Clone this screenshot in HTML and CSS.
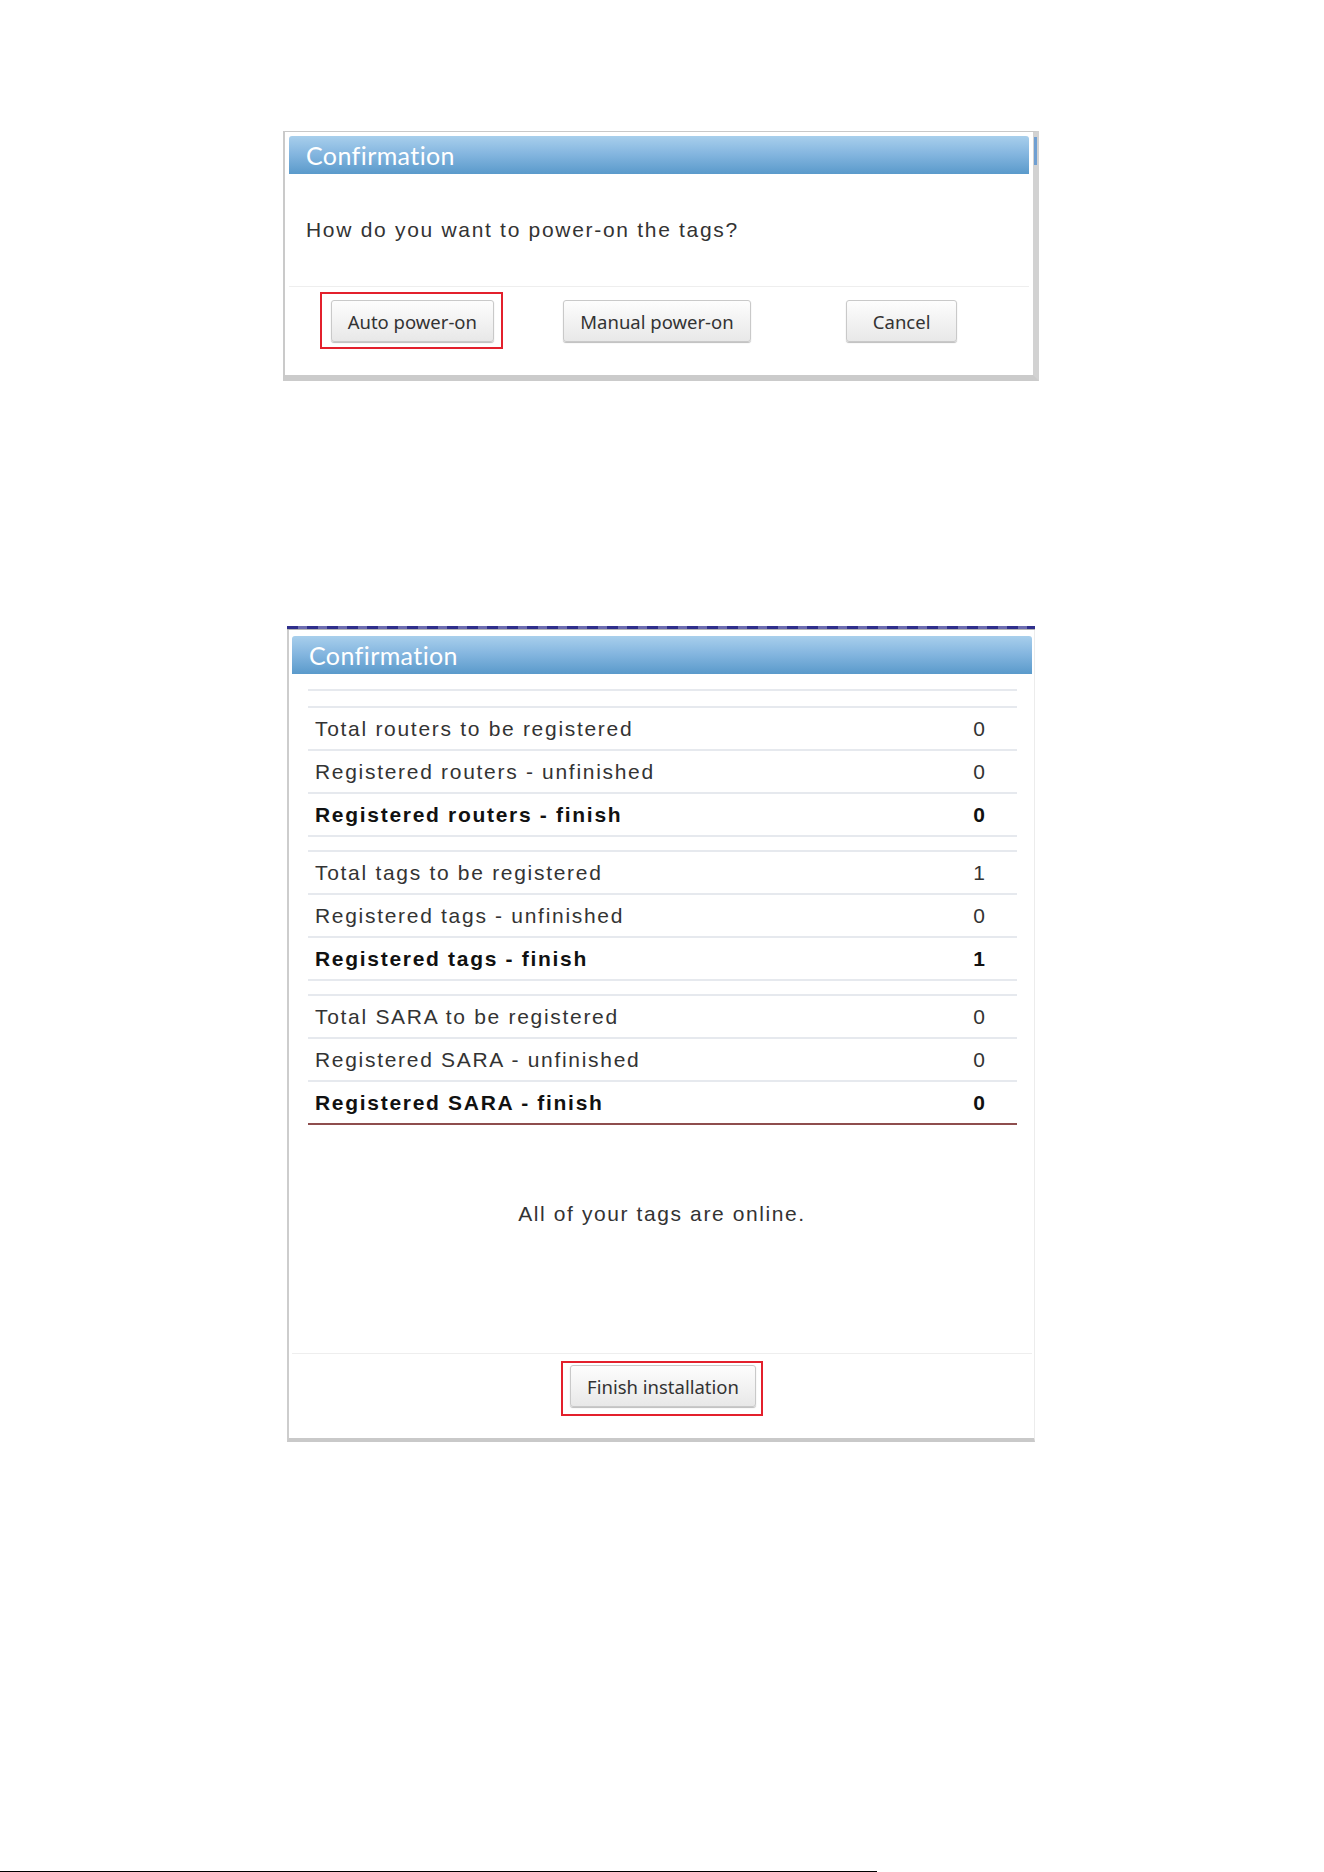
FILE: index.html
```html
<!DOCTYPE html>
<html lang="en">
<head>
    <meta charset="UTF-8">
    <title>Confirmation</title>
    <link rel="stylesheet" href="styles.css">
</head>
<body>
    <div class="page">
        <!-- power-on question -->
        <div class="dialog dialog-power">
            <div class="dialog-head">Confirmation</div>
            <div class="dialog-text">How do you want to power-on the tags?</div>
            <div class="dialog-foot three">
                <span class="slot marked"><button class="btn">Auto power-on</button></span>
                <span class="slot"><button class="btn">Manual power-on</button></span>
                <span class="slot"><button class="btn">Cancel</button></span>
            </div>
        </div>

        <!-- registration summary -->
        <div class="dialog dialog-summary">
            <div class="dialog-head">Confirmation</div>
            <table class="summary">
                <tr class="blank"><td colspan="2"></td></tr>
                <tr><td>Total routers to be registered</td><td class="num">0</td></tr>
                <tr><td>Registered routers - unfinished</td><td class="num">0</td></tr>
                <tr class="strong"><td>Registered routers - finish</td><td class="num">0</td></tr>
                <tr class="gap"><td colspan="2"></td></tr>
                <tr><td>Total tags to be registered</td><td class="num">1</td></tr>
                <tr><td>Registered tags - unfinished</td><td class="num">0</td></tr>
                <tr class="strong"><td>Registered tags - finish</td><td class="num">1</td></tr>
                <tr class="gap"><td colspan="2"></td></tr>
                <tr><td>Total SARA to be registered</td><td class="num">0</td></tr>
                <tr><td>Registered SARA - unfinished</td><td class="num">0</td></tr>
                <tr class="strong last"><td>Registered SARA - finish</td><td class="num">0</td></tr>
            </table>
            <div class="message">All of your tags are online.</div>
            <div class="dialog-foot single">
                <span class="slot marked finish"><button class="btn">Finish installation</button></span>
            </div>
        </div>

        <div class="page-rule"></div>
    </div>
</body>
</html>
```

FILE: styles.css
```css
body {
    margin: 0;
    background: #fff;
    font-family: "Liberation Sans", Arial, sans-serif;
    color: #333;
}
.page {
    padding-top: 131px;
}
.dialog {
    box-sizing: border-box;
    background: #fff;
    position: relative;
}
.dialog-power {
    margin-left: 283px;
    width: 756px;
    border-top: 1px solid #c8c8c8;
    border-left: 2px solid #cacaca;
    border-right: 6px solid #d2d2d2;
    border-bottom: 6px solid #cbcbcb;
    padding: 4px 4px 0 4px;
}
/* little blue scroll thumb on the right edge */
.dialog-power::after {
    content: "";
    position: absolute;
    right: -4px;
    top: 5px;
    width: 3px;
    height: 28px;
    background: #6f9fd2;
}
.dialog-summary {
    margin-top: 245px;
    margin-left: 287px;
    width: 748px;
    border-left: 2px solid #cdcdcd;
    border-right: 1px solid #ececec;
    border-bottom: 4px solid #c9c9c9;
    padding: 10px 2px 0 3px;
}
/* dashed navy rule above the summary box */
.dialog-summary::before {
    content: "";
    position: absolute;
    left: -2px;
    right: -1px;
    top: 0;
    height: 3px;
    background: repeating-linear-gradient(90deg, #2f2f8c 0, #2f2f8c 11px, #6c6cb0 11px, #6c6cb0 20px);
    border-bottom: 1px solid #b4b4b4;
}
.dialog-head {
    height: 38px;
    line-height: 38px;
    padding-left: 17px;
    font-family: Lato, "Open Sans", sans-serif;
    font-size: 25px;
    letter-spacing: 0.4px;
    color: #fff;
    background: linear-gradient(#a8cfec, #86b7e0 45%, #5a9acb);
    border-radius: 3px 3px 0 0;
}
.dialog-text {
    padding: 44px 17px 44px;
    font-size: 21px;
    line-height: 24px;
    letter-spacing: 1.7px;
    border-bottom: 1px solid #eeeeee;
}
.dialog-foot {
    padding: 5px 0 26px;
}
.dialog-foot.three {
    display: grid;
    grid-template-columns: 1fr 1fr 1fr;
    justify-items: center;
    padding-right: 6px;
}
.dialog-foot.single {
    display: flex;
    justify-content: center;
    padding: 7px 0 22px;
    border-top: 1px solid #eeeeee;
}
.slot {
    display: inline-block;
    padding: 6px 7px 5px 9px;
    border: 2px solid transparent;
}
.slot.marked {
    border-color: #e3202c;
}
.slot.finish {
    padding: 2px 5px 7px 7px;
}
.btn {
    height: 42px;
    min-width: 111px;
    padding: 0 16px;
    font-family: "Noto Sans", "Open Sans", sans-serif;
    font-size: 18.5px;
    color: #333;
    background: linear-gradient(#fdfdfd, #e8e8e8);
    border: 1px solid #c9c9c9;
    border-radius: 3px;
    box-shadow: 0 1px 1px #bdbdbd;
    cursor: pointer;
}
.summary {
    margin: 15px 15px 0 16px;
    width: 709px;
    border-collapse: collapse;
    border-top: 2px solid #e6e9ee;
    font-size: 21px;
    letter-spacing: 1.7px;
    line-height: 24px;
}
.summary td {
    height: 41px;
    padding: 0 7px;
    border-bottom: 2px solid #e6e9ee;
    vertical-align: middle;
}
.summary .blank td {
    height: 15px;
    padding: 0;
}
.summary .gap td {
    height: 13px;
    padding: 0;
}
.summary .num {
    width: 62px;
    text-align: center;
    letter-spacing: 0;
}
.summary .strong td {
    font-weight: bold;
    color: #111;
}
.summary .last td {
    border-bottom-color: #8e4e4e;
}
.message {
    padding: 77px 0 127px;
    text-align: center;
    font-size: 21px;
    line-height: 24px;
    letter-spacing: 1.6px;
}
.page-rule {
    margin-top: 429px;
    width: 877px;
    height: 2px;
    background: #000;
}
```
